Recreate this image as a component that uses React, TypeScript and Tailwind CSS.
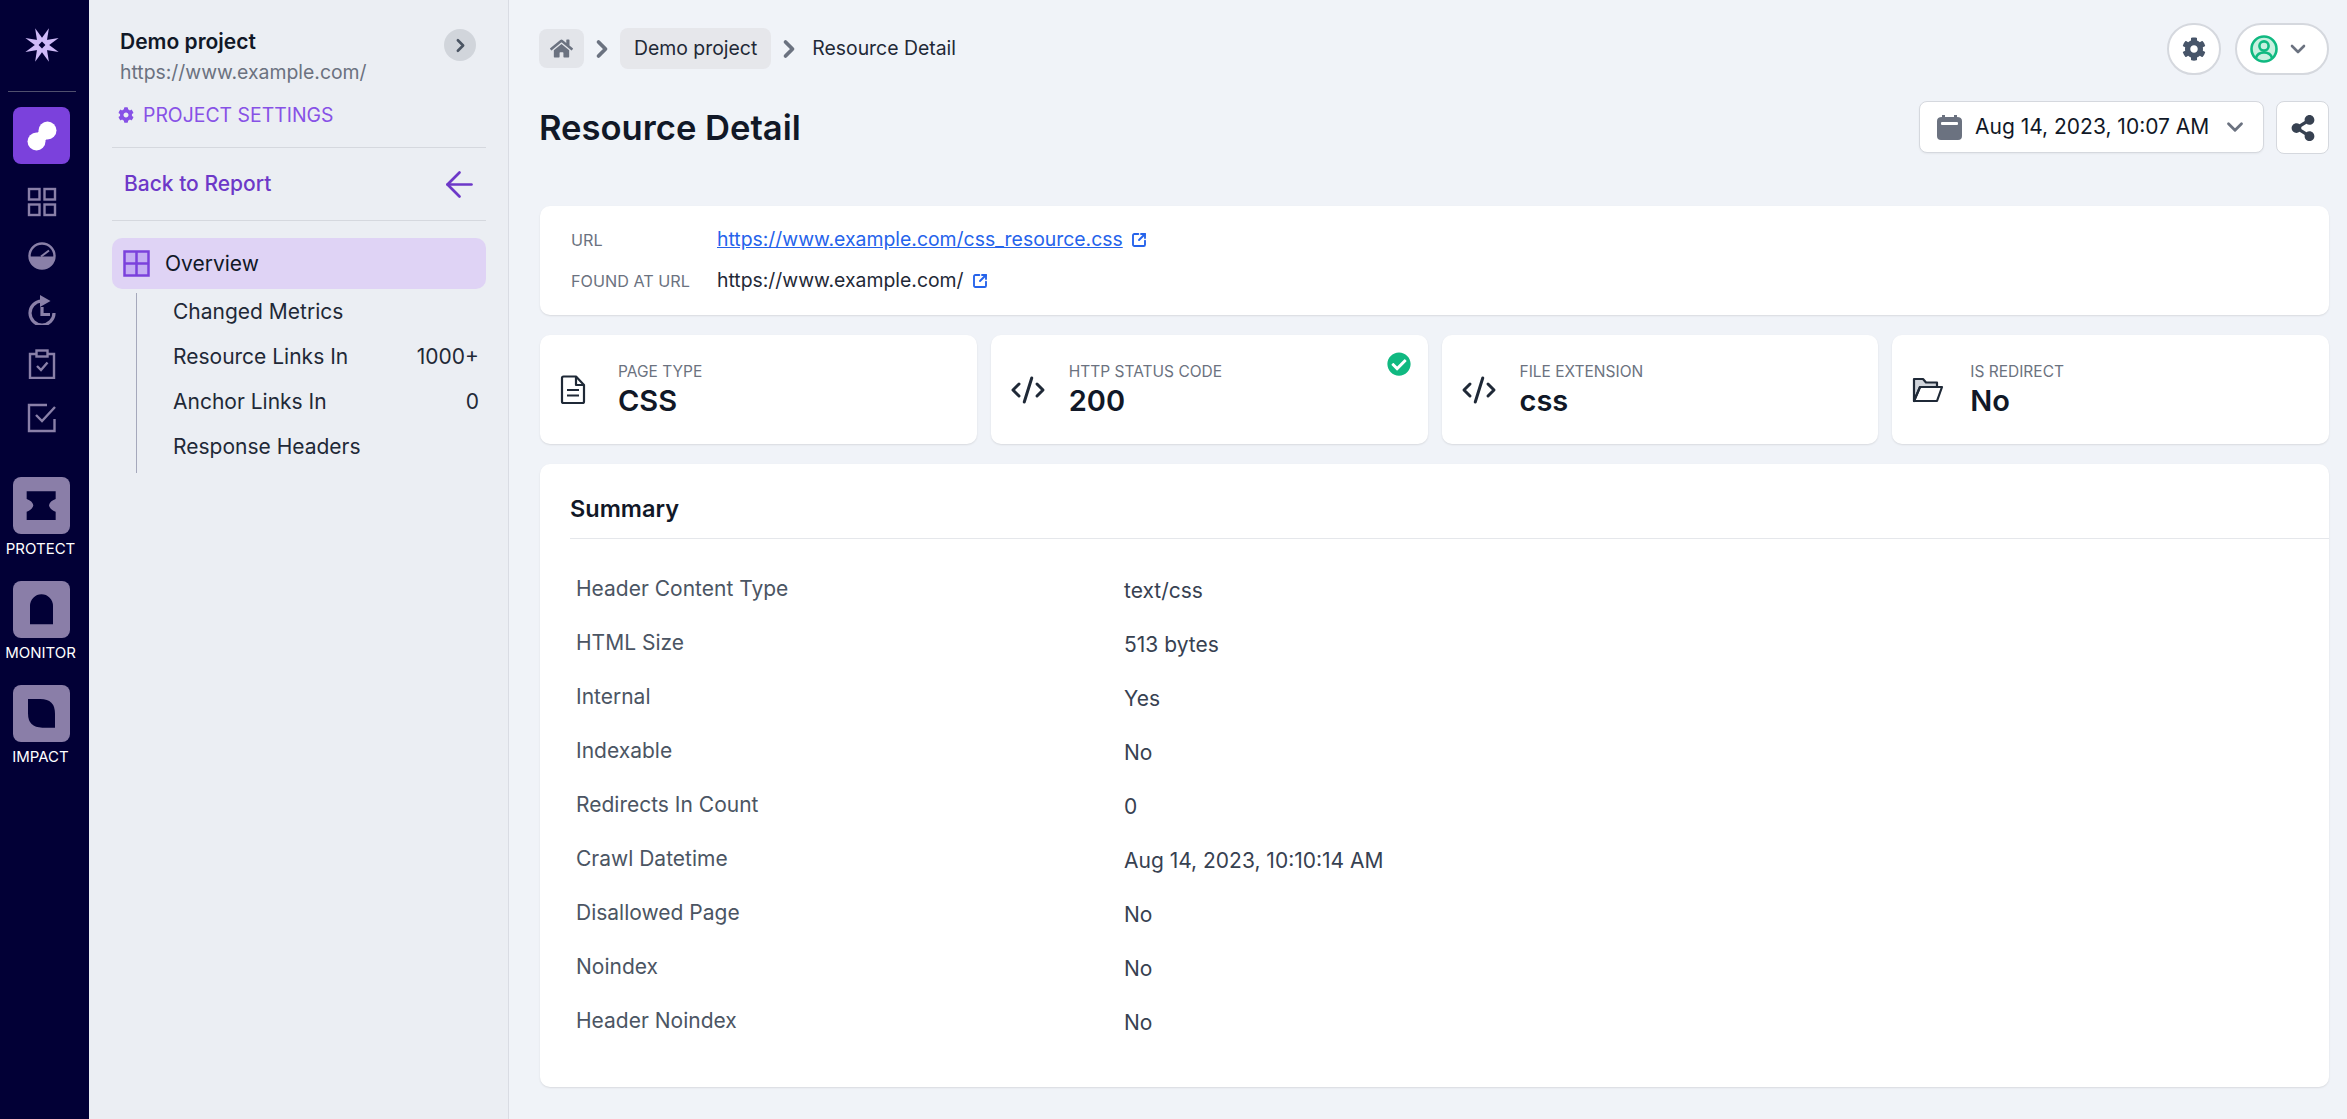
import React from "react";
import { ArrowLeft, ChevronDown, ChevronRight, CodeXml, SquareArrowOutUpRight } from "lucide-react";
import { FaCheckCircle, FaCog, FaHome, FaShareAlt } from "react-icons/fa";

const railStroke = "#8a80a8";

function Logo() {
  const spikes = [22.5, 67.5, 112.5, 157.5, 202.5, 247.5, 292.5, 337.5];
  return (
    <svg width="38" height="38" viewBox="-19 -19 38 38">
      {spikes.map((a) => (
        <polygon key={a} points="-3.6,-3 0,-18 3.6,-3" fill="#cfbaf8" transform={`rotate(${a})`} />
      ))}
      <circle cx="0" cy="0" r="4.4" fill="#cfbaf8" />
      <polygon points="0,-3.4 3.4,0 0,3.4 -3.4,0" fill="#020036" />
    </svg>
  );
}

function RailIcon({ children }: { children: React.ReactNode }) {
  return (
    <div className="flex h-[54px] w-full items-center justify-center">
      <svg width="30" height="30" viewBox="0 0 30 30" fill="none" stroke={railStroke} strokeWidth="2.4">
        {children}
      </svg>
    </div>
  );
}

function Tile({ label, d }: { label: string; d: string }) {
  return (
    <div className="flex h-[104px] flex-col items-center">
      <div className="h-[57px] w-[57px] overflow-hidden rounded-[8px] bg-[#8a7ea8]">
        <svg width="57" height="57" viewBox="0 0 171 171">
          <path d={d} fill="#020036" />
        </svg>
      </div>
      <div className="mt-[6px] -ml-[2px] text-[15px] leading-[18px] text-white">{label}</div>
    </div>
  );
}

function Rail() {
  return (
    <aside className="flex h-full w-[89px] shrink-0 flex-col items-center bg-[#020036] pr-[6px]">
      <div className="flex h-[91px] w-full items-center justify-center pb-[2px]">
        <Logo />
      </div>
      <div className="h-px w-[68px] bg-[#50506e]" />
      <div className="mt-[15px] flex h-[57px] w-[57px] items-center justify-center rounded-[8px] bg-[#7b41dc]">
        <svg width="30" height="30" viewBox="0 0 30 30">
          <circle cx="9.5" cy="20.5" r="9" fill="#fff" />
          <circle cx="20.5" cy="9.5" r="9" fill="#fff" />
          <line x1="9.5" y1="20.5" x2="20.5" y2="9.5" stroke="#fff" strokeWidth="11" />
        </svg>
      </div>
      <div className="mt-[11px] w-full">
        <RailIcon>
          <rect x="2" y="2" width="10.5" height="10.5" />
          <rect x="17.5" y="2" width="10.5" height="10.5" />
          <rect x="2" y="17.5" width="10.5" height="10.5" />
          <rect x="17.5" y="17.5" width="10.5" height="10.5" />
        </RailIcon>
        <RailIcon>
          <circle cx="15" cy="15" r="12.5" />
          <path d="M2.5 15.5 A12.5 12.5 0 0 0 27.5 15.5 Z" fill={railStroke} stroke="none" />
          <path d="M14 15.5 L22 9.5" strokeWidth="2" />
        </RailIcon>
        <RailIcon>
          <path d="M14.5 6 A12 12 0 1 0 27 18" strokeWidth="3.2" />
          <path d="M13 0 L23.5 6 L13 12 Z" fill={railStroke} stroke="none" />
          <path d="M15 12 V19.5 H23" strokeWidth="3.2" />
        </RailIcon>
        <RailIcon>
          <path d="M9.5 5 H3 V29 H27 V5 H20.5" />
          <rect x="9.5" y="1.5" width="11" height="6" />
          <path d="M10 17 L14 21 L20.5 13.5" />
        </RailIcon>
        <RailIcon>
          <path d="M27.5 16 V28 H2 V2 H20" />
          <path d="M9 12 L15 18 L28 4" />
        </RailIcon>
      </div>
      <div className="mt-[32px] w-full">
        <Tile label="PROTECT" d="M41 43 H128 V66 C116 70 110 76 108 85 C110 94 116 100 128 104 V129 H41 V104 C53 100 59 94 61 85 C59 76 53 70 41 66 Z" />
        <Tile label="MONITOR" d="M51 130 V75 A34.5 35 0 0 1 120 75 V130 Z" />
        <Tile label="IMPACT" d="M45 42 H82 Q126 42 126 86 V128 H88 Q45 128 45 85 Z" />
      </div>
    </aside>
  );
}

function SubItem({ label, count }: { label: string; count?: string }) {
  return (
    <div className="flex h-[45px] items-center justify-between pr-[7px] pb-[7px] pl-[36px] text-[21px] text-[#1f2937]">
      <span>{label}</span>
      {count && <span>{count}</span>}
    </div>
  );
}

function ProjectPanel() {
  return (
    <aside className="h-full w-[420px] shrink-0 border-r border-[#d9dce3] bg-[#ebeef3] pr-[22px] pl-[23px]">
      <div className="relative h-[148px] border-b border-[#d5d8de] pt-[27px]">
        <div className="pl-[8px] text-[21px] leading-[30px] font-semibold text-[#111827]">Demo project</div>
        <div className="pl-[8px] text-[19.4px] leading-[30px] text-[#6b7280]">https://www.example.com/</div>
        <div className="mt-[13px] flex items-center gap-[9px] pl-[6px] text-[19.4px] leading-[30px] text-[#8751e6]">
          <FaCog size={16} />
          <span>PROJECT SETTINGS</span>
        </div>
        <button className="absolute top-[29px] right-[10px] flex h-[32px] w-[32px] items-center justify-center rounded-full bg-[#d1d5db] text-[#4b5563]">
          <ChevronRight size={21} strokeWidth={3} />
        </button>
      </div>
      <div className="flex h-[73px] items-center justify-between border-b border-[#d5d8de] pr-[6px] pl-[12px] text-[21px] font-medium text-[#6d38c8]">
        <span>Back to Report</span>
        <ArrowLeft size={41} strokeWidth={1.6} />
      </div>
      <div className="mt-[17px] flex h-[51px] items-center gap-[15px] rounded-[10px] bg-[#dfd3f5] pl-[11px] text-[21px] text-[#111827]">
        <svg width="27" height="27" viewBox="0 0 27 27">
          <rect x="1.5" y="1.5" width="24" height="24" fill="#c5aef3" stroke="#7b41dc" strokeWidth="2.5" />
          <path d="M13.5 1.5 V25.5 M1.5 13.5 H25.5" stroke="#7b41dc" strokeWidth="2.5" />
        </svg>
        <span>Overview</span>
      </div>
      <div className="mt-[4px] ml-[24px] border-l border-[#a5a8bb]">
        <SubItem label="Changed Metrics" />
        <SubItem label="Resource Links In" count="1000+" />
        <SubItem label="Anchor Links In" count="0" />
        <SubItem label="Response Headers" />
      </div>
    </aside>
  );
}

function ExtLink() {
  return <SquareArrowOutUpRight size={16} strokeWidth={2.8} className="ml-[8px] inline-block text-[#2563eb]" />;
}

function Breadcrumb() {
  return (
    <div className="-ml-px flex items-center text-[19.4px] text-[#1f2937]">
      <div className="flex h-[39px] w-[45px] items-center justify-center rounded-[8px] bg-[#e3e5ea] text-[#6b7280]">
        <FaHome size={23} />
      </div>
      <ChevronRight size={28} strokeWidth={3.2} className="mx-[4px] text-[#6b7280]" />
      <div className="flex h-[41px] items-center rounded-[8px] bg-[#e6e7eb] px-[14px]">Demo project</div>
      <ChevronRight size={28} strokeWidth={3.2} className="mx-[4px] text-[#6b7280]" />
      <span className="ml-[5px]">Resource Detail</span>
    </div>
  );
}

function Stat({ icon, label, value, badge }: { icon: React.ReactNode; label: string; value: string; badge?: boolean }) {
  return (
    <div className="relative flex h-[109px] items-center rounded-[10px] bg-white pl-[20px] shadow-[0_1px_2px_rgba(0,0,0,0.1)]">
      <div className="flex w-[58px] shrink-0 items-center">{icon}</div>
      <div className="pt-[2px]">
        <div className="text-[15.5px] leading-[20px] text-[#6b7280]">{label}</div>
        <div className="mt-[1px] text-[29px] leading-[36px] font-semibold text-[#111827]">{value}</div>
      </div>
      {badge && <FaCheckCircle size={24} className="absolute top-[17px] right-[17px] text-[#10b981]" />}
    </div>
  );
}

function DocIcon() {
  return (
    <svg width="26" height="30" viewBox="0 0 26 30" fill="none" stroke="#1f2937" strokeWidth="2.2" strokeLinejoin="round">
      <path d="M2 3 Q2 1.5 3.5 1.5 H16 L24 10 V26.5 Q24 28 22.5 28 H3.5 Q2 28 2 26.5 Z" />
      <path d="M16 1.5 V10 H24" />
      <path d="M7 15 H19 M7 20.5 H19" />
    </svg>
  );
}

function FolderIcon() {
  return (
    <svg width="32" height="26" viewBox="0 0 32 26" fill="none" stroke="#1f2937" strokeWidth="2.2" strokeLinejoin="round">
      <path d="M2 24 V2 H11 L14 5.5 H25 V10 H8 L2 24 Z" fill="#d1d5db" />
      <path d="M2 24 L8 10 H30 L25 24 Z" />
    </svg>
  );
}

const rows: [string, string][] = [
  ["Header Content Type", "text/css"],
  ["HTML Size", "513 bytes"],
  ["Internal", "Yes"],
  ["Indexable", "No"],
  ["Redirects In Count", "0"],
  ["Crawl Datetime", "Aug 14, 2023, 10:10:14 AM"],
  ["Disallowed Page", "No"],
  ["Noindex", "No"],
  ["Header Noindex", "No"],
];

function Main() {
  return (
    <main className="h-full min-w-0 flex-1 bg-[#f0f3f8] pr-[18px] pl-[31px]">
      <div className="flex h-[101px] items-start justify-between pt-[23px]">
        <div className="pt-[5px]">
          <Breadcrumb />
        </div>
        <div className="flex gap-[14px]">
          <button className="flex h-[52px] w-[54px] items-center justify-center rounded-full border-2 border-[#d5d8de] bg-white text-[#475569]">
            <FaCog size={24} />
          </button>
          <button className="flex h-[52px] w-[94px] items-center rounded-full border-2 border-[#d5d8de] bg-white pl-[13px]">
            <svg width="28" height="28" viewBox="0 0 28 28" fill="none" stroke="#10b981" strokeWidth="2.6">
              <circle cx="14" cy="14" r="12.5" fill="#c9f0e0" />
              <circle cx="14" cy="11" r="4.6" />
              <path d="M6 23 Q7.5 17.5 14 17.5 Q20.5 17.5 22 23" />
            </svg>
            <ChevronDown size={24} strokeWidth={2.6} className="ml-[8px] text-[#6b7280]" />
          </button>
        </div>
      </div>
      <div className="flex items-start justify-between">
        <h1 className="mt-[5px] -ml-px text-[34.6px] leading-[42px] font-semibold text-[#111827]">Resource Detail</h1>
        <div className="flex gap-[12px]">
          <button className="flex h-[52px] w-[345px] items-center rounded-[8px] border border-[#d5d8de] bg-white pl-[17px] text-[21px] text-[#111827] shadow-[0_1px_2px_rgba(0,0,0,0.05)]">
            <svg width="25" height="25" viewBox="0 0 25 25">
              <path d="M5 0 H8 V2 H17 V0 H20 V2 Q25 2 25 6 V21 Q25 25 21 25 H4 Q0 25 0 21 V6 Q0 2 5 2 Z" fill="#6b7280" />
              <rect x="4" y="7" width="17" height="3" rx="1" fill="#fff" />
            </svg>
            <span className="ml-[13px]">Aug 14, 2023, 10:07 AM</span>
            <ChevronDown size={26} strokeWidth={2.6} className="ml-[13px] text-[#6b7280]" />
          </button>
          <button className="flex h-[53px] w-[53px] items-center justify-center rounded-[8px] border border-[#d5d8de] bg-white text-[#374151]">
            <FaShareAlt size={26} />
          </button>
        </div>
      </div>
      <section className="mt-[52px] flex h-[109px] flex-col justify-center gap-[12px] rounded-[10px] bg-white pl-[31px] shadow-[0_1px_2px_rgba(0,0,0,0.1)]">
        <div className="flex h-[29px] items-center">
          <div className="w-[146px] text-[16.2px] text-[#6b7280]">URL</div>
          <a className="text-[19.4px] text-[#2563eb] underline">https://www.example.com/css_resource.css</a>
          <ExtLink />
        </div>
        <div className="flex h-[29px] items-center">
          <div className="w-[146px] text-[16.2px] text-[#6b7280]">FOUND AT URL</div>
          <span className="text-[19.4px] text-[#1f2937]">https://www.example.com/</span>
          <ExtLink />
        </div>
      </section>
      <div className="mt-[20px] grid grid-cols-4 gap-[14px]">
        <Stat icon={<DocIcon />} label="PAGE TYPE" value="CSS" />
        <Stat icon={<CodeXml size={36} strokeWidth={2} className="-ml-[1px] text-[#1f2937]" />} label="HTTP STATUS CODE" value="200" badge />
        <Stat icon={<CodeXml size={36} strokeWidth={2} className="-ml-[1px] text-[#1f2937]" />} label="FILE EXTENSION" value="css" />
        <Stat icon={<FolderIcon />} label="IS REDIRECT" value="No" />
      </div>
      <section className="mt-[20px] h-[623px] rounded-[10px] bg-white pl-[30px] shadow-[0_1px_2px_rgba(0,0,0,0.1)]">
        <div className="flex h-[75px] items-center border-b border-[#e5e7eb] pt-[15px] text-[23.5px] font-semibold text-[#111827]">Summary</div>
        <div className="pt-[23px] pl-[6px]">
          {rows.map(([k, v]) => (
            <div key={k} className="grid h-[54px] grid-cols-[548px_1fr] text-[21px] leading-[54px]">
              <div className="text-[#4b5563]">{k}</div>
              <div className="pt-[2px] text-[#374151]">{v}</div>
            </div>
          ))}
        </div>
      </section>
    </main>
  );
}

export default function App() {
  return (
    <div className="flex h-[1119px] w-full overflow-hidden font-['Inter',sans-serif]">
      <Rail />
      <ProjectPanel />
      <Main />
    </div>
  );
}
